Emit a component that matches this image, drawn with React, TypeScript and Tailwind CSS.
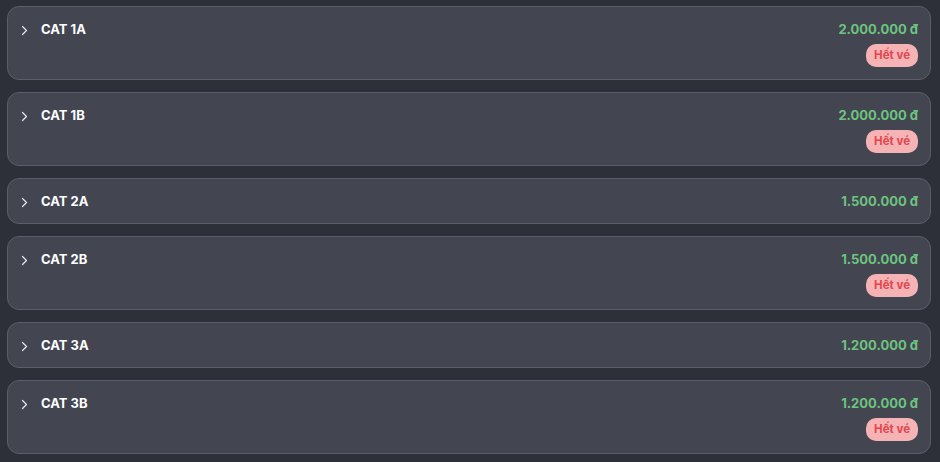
const tickets = [
  { name: 'CAT 1A', price: '2.000.000 đ', soldOut: true },
  { name: 'CAT 1B', price: '2.000.000 đ', soldOut: true },
  { name: 'CAT 2A', price: '1.500.000 đ', soldOut: false },
  { name: 'CAT 2B', price: '1.500.000 đ', soldOut: true },
  { name: 'CAT 3A', price: '1.200.000 đ', soldOut: false },
  { name: 'CAT 3B', price: '1.200.000 đ', soldOut: true },
];

function Chevron() {
  return (
    <svg width="10" height="20" viewBox="0 0 10 20" fill="none" className="shrink-0">
      <path
        d="M2.5 7.5 L6.5 11.5 L2.5 15.5"
        stroke="#e5e7eb"
        strokeWidth="1.2"
        strokeLinecap="round"
        strokeLinejoin="round"
      />
    </svg>
  );
}

export default function App() {
  return (
    <div
      className="min-h-[462px] w-[940px] bg-[#2e3039] pl-[7px] pr-[9px] pt-[6px] pb-2"
      style={{ fontFamily: 'Inter, "Noto Sans", sans-serif' }}
    >
      <div className="flex flex-col gap-3">
        {tickets.map((t) => (
          <div
            key={t.name}
            className="flex items-start justify-between rounded-xl border border-[#5b5e6a] bg-[#434651] p-3"
          >
            <div className="flex items-center gap-[11px]">
              <Chevron />
              <span className="text-[13px] font-bold leading-5 text-white">{t.name}</span>
            </div>
            <div className="flex flex-col items-end">
              <span className="text-[13px] font-bold leading-5 text-[#6cc47f]">{t.price}</span>
              {t.soldOut && (
                <span className="mt-[5px] flex h-[23px] items-center rounded-[10px] bg-[#f6b3b5] px-2 text-[11.5px] font-bold text-[#e2464f]">
                  Hết vé
                </span>
              )}
            </div>
          </div>
        ))}
      </div>
    </div>
  );
}
